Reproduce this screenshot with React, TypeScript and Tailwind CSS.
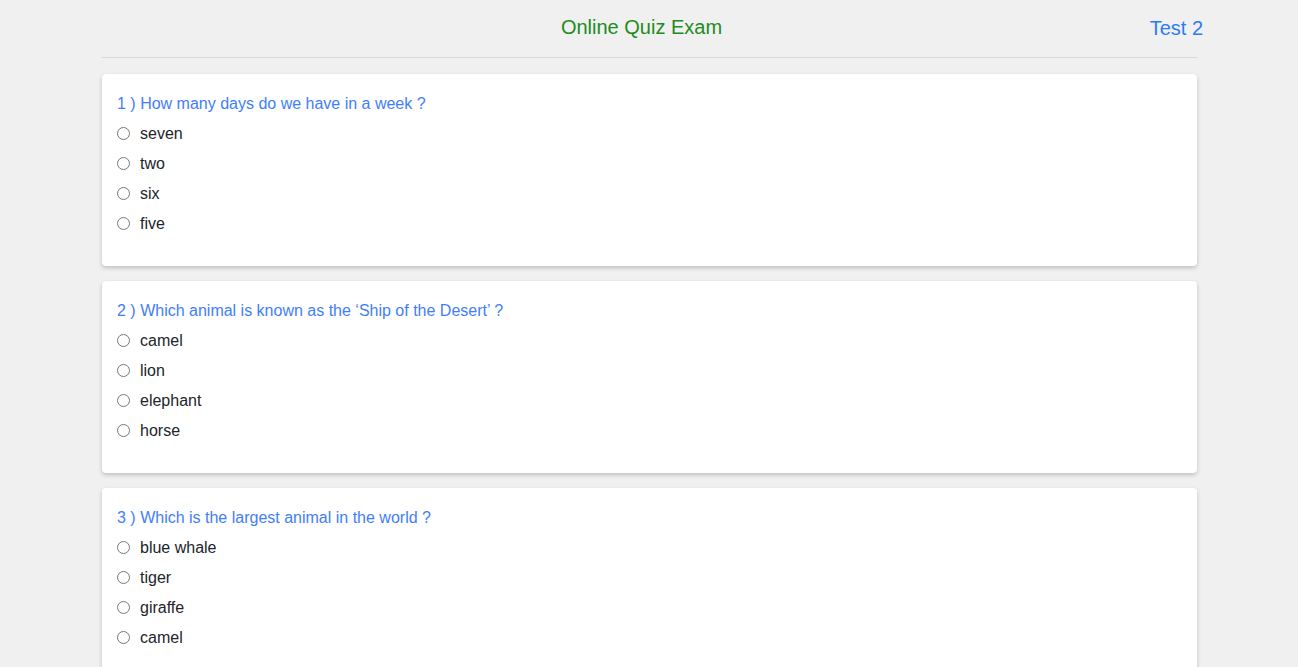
import React, { useState } from 'react'

const questions = [
  { q: 'How many days do we have in a week ?', options: ['seven', 'two', 'six', 'five'] },
  { q: 'Which animal is known as the \u2018Ship of the Desert\u2019 ?', options: ['camel', 'lion', 'elephant', 'horse'] },
  { q: 'Which is the largest animal in the world ?', options: ['blue whale', 'tiger', 'giraffe', 'camel'] },
  { q: 'How many colours are there in a rainbow ?', options: ['seven', 'five', 'eight', 'six'] },
  { q: 'Which is the tallest animal in the world ?', options: ['giraffe', 'elephant', 'horse', 'camel'] },
]

export default function App() {
  const [answers, setAnswers] = useState<Record<number, string>>({})

  return (
    <div className="h-screen overflow-y-scroll bg-[#f0f0f0]" style={{ fontFamily: '"Liberation Sans", Arial, sans-serif' }}>
      {/* header spans the page width minus the scrollbar gutter */}
      <div className="grid grid-cols-[1fr_auto_1fr] items-center pt-[4px] h-[50px] w-[1283px]">
        <div />
        <h1 className="text-[20px] leading-[28px] text-[#228b22]">Online Quiz Exam</h1>
        <div className="text-right pr-[80px] text-[20px] leading-[28px] text-[#2a7cf6] pt-[1px]">Test 2</div>
      </div>

      <div className="ml-[102px] w-[1095px] pb-6">
        <div className="border-t border-[#d8d8d8] mt-[7px]" />

        <div className="flex flex-col gap-[15px] mt-[16px]">
          {questions.map((item, i) => (
            <div key={i} className="bg-white rounded-[4px] shadow-[0_2px_4px_rgba(0,0,0,0.2)] px-[15px] pt-[19px] pb-[27px]">
              <p className="text-[16px] leading-[22px] text-[#3f7efb] mb-[4px]">
                {i + 1} ) {item.q}
              </p>
              {item.options.map((opt) => (
                <label key={opt} className="flex items-center h-[30px] text-[16px] text-[#212529]">
                  <input
                    type="radio"
                    name={'q' + i}
                    checked={answers[i] === opt}
                    onChange={() => setAnswers({ ...answers, [i]: opt })}
                    className="m-0 mr-[10px] w-[13px] h-[13px] -translate-y-[1px]"
                  />
                  {opt}
                </label>
              ))}
            </div>
          ))}
        </div>
      </div>
    </div>
  )
}
